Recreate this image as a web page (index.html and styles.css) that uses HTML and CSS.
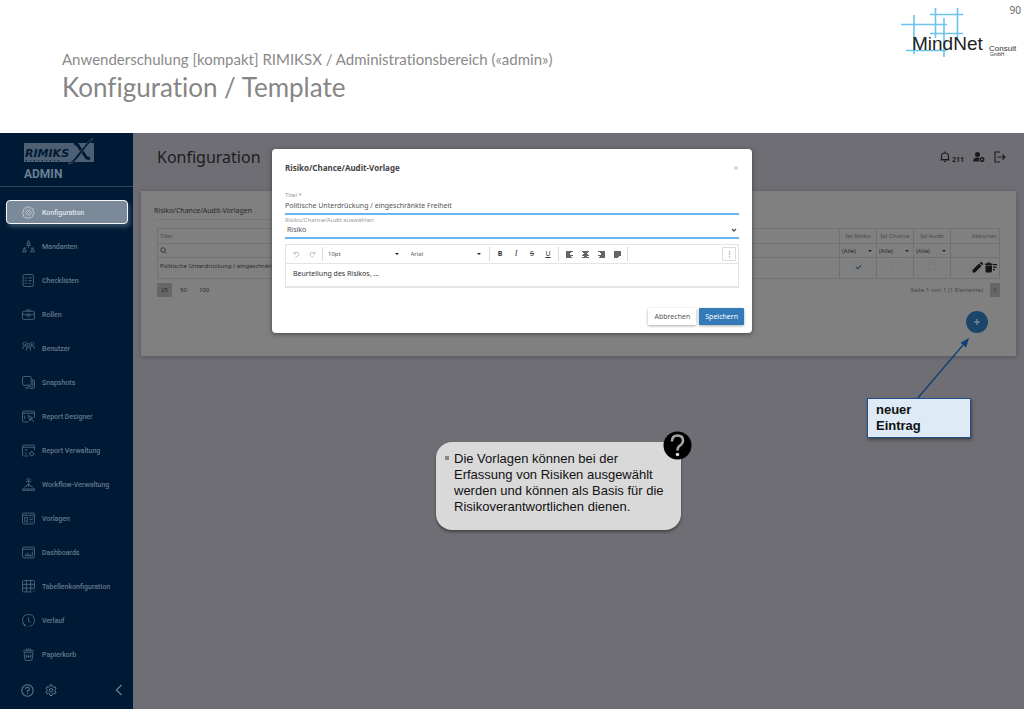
FILE: index.html
```html
<!DOCTYPE html>
<html lang="de">
<head>
<meta charset="utf-8">
<title>Konfiguration / Template</title>
<link rel="stylesheet" href="styles.css">
</head>
<body>
<header class="slide-header">
  <div class="headings">
    <p class="kicker">Anwenderschulung [kompakt] RIMIKSX / Administrationsbereich («admin»)</p>
    <h1 class="slide-title">Konfiguration / Template</h1>
  </div>
  <svg class="mindnet" width="120" height="54" viewBox="0 0 120 54" role="img" aria-label="MindNet Consult GmbH">
    <g stroke="#6cc3ec" stroke-width="1.6" fill="none">
      <path d="M1 19.500H47M6 45.500H47M30 9.500H63M30 28.500H63"/>
      <path d="M14 10V49M44 13V52M35.500 3V33M57.500 3V33"/>
    </g>
    <text x="12" y="45" class="logo-main">MindNet</text>
    <text x="89" y="46" class="logo-sub">Consult</text>
    <text x="90" y="51" class="logo-tiny">GmbH</text>
  </svg>
  <span class="page-no">90</span>
</header>

<div class="stage">
  <aside class="sidebar">
    <div class="brand">
      <svg width="72" height="30" viewBox="0 0 72 30" role="img" aria-label="RIMIKSX Software">
        <rect x="0" y="6" width="70" height="19" fill="#4d6073"/>
        <text x="1" y="20" class="brand-name">RIMIKS</text>
        <path d="M50 7q3-1 5 3l7 10q1 2 4 1" fill="none" stroke="#001a35" stroke-width="3"/>
        <path d="M69 1q-1 3-6 8L53 22q-4 5-9 5 6-4 9-9L62 7q4-5 7-6z" fill="#001a35" stroke="#4d6073" stroke-width=".6"/>
        <path d="M2 23.500h34" stroke="#001a35" stroke-width="1" stroke-dasharray="1 3"/>
      </svg>
      <span class="brand-role">ADMIN</span>
    </div>
    <nav class="menu">
      <a href="#" class="item active"><svg class="ic" viewBox="0 0 24 24"><path d="M9.500 1.500h5l1 3 3-1 3 4-2 2.500 3 1.500v3l-3 1 1 3-3 3-3-1-1.500 3h-3l-1.500-3-3 1-3-3 1-3-3-1.500v-3l3-1-1-3 3-4 3 1z"/><circle cx="12" cy="12" r="5"/><path d="M10 12l2-2 2 2-2 2z"/></svg><span>Konfiguration</span></a>
      <a href="#" class="item"><svg class="ic" viewBox="0 0 24 24"><circle cx="12" cy="3.500" r="2"/><path d="M8.500 10q0-4 3.500-4t3.500 4zM12 10v4M8 14l-3 2M16 14l3 2M1 22q0-4 3.500-4T8 22zM16 22q0-4 3.500-4t3.500 4z"/><circle cx="4.500" cy="16" r="1.500"/><circle cx="19.500" cy="16" r="1.500"/></svg><span>Mandanten</span></a>
      <a href="#" class="item"><svg class="ic" viewBox="0 0 24 24"><path d="M5 1h14q2 0 2 2v17q0 3-3 3H5q-3 0-3-3V3q0-2 3-2zM5 7l1.500 1.500L9 6M12 7h6M5 12l1.500 1.500L9 11M12 12h6M5 17l1.500 1.500L9 16M12 17h4"/></svg><span>Checklisten</span></a>
      <a href="#" class="item"><svg class="ic" viewBox="0 0 24 24"><path d="M3 6h18q2 0 2 2v11q0 2-2 2H3q-2 0-2-2V8q0-2 2-2zM8 6q0-3 4-3t4 3M1 10q3 3 9 3M14 13q6 0 9-3M10 11h4v4h-4z"/></svg><span>Rollen</span></a>
      <a href="#" class="item"><svg class="ic" viewBox="0 0 24 24"><circle cx="5" cy="3" r="3"/><circle cx="19" cy="3" r="3"/><circle cx="12" cy="5" r="2.500"/><path d="M1 13q0-6 4-6 3 0 4 3M23 13q0-6-4-6-3 0-4 3M8 16q0-7 4-7t4 7"/></svg><span>Benutzer</span></a>
      <a href="#" class="item"><svg class="ic" viewBox="0 0 24 24"><path d="M3 1h12q2 0 2 2v12q0 2-2 2H3q-2 0-2-2V3q0-2 2-2zM6 20l2 3h4M15 23h5q3 0 3-3V9l-3-3M20 6v11q0 3-3 3H9"/></svg><span>Snapshots</span></a>
      <a href="#" class="item"><svg class="ic" viewBox="0 0 24 24"><path d="M12 22H3q-2 0-2-2V4q0-2 2-2h18q2 0 2 2v10M1 6h22M5 10v7M11 10l4 10 1-4 4-1zM17 17l5 5"/></svg><span>Report Designer</span></a>
      <a href="#" class="item"><svg class="ic" viewBox="0 0 24 24"><path d="M12 22H3q-2 0-2-2V4q0-2 2-2h18q2 0 2 2v7M1 6h22M5 11h5M5 17h4"/><circle cx="18" cy="18" r="3.500"/><path d="M18 13v2M18 21v2M13 18h2M21 18h2"/></svg><span>Report Verwaltung</span></a>
      <a href="#" class="item"><svg class="ic" viewBox="0 0 24 24"><path d="M8 3q4-4 8 0M7 7l5-2 5 2M12 5v11M8 16q0-4 4-4t4 4M4 17l4-3M20 17l-4-3M1 23v-3h6v3zM9 23v-3h6v3zM17 23v-3h6v3z"/></svg><span>Workflow-Verwaltung</span></a>
      <a href="#" class="item"><svg class="ic" viewBox="0 0 24 24"><path d="M3 2h18q2 0 2 2v15q0 3-3 3H4q-3 0-3-3V4q0-2 2-2zM1 6h22M5 10h5v8H5zM14 10h2M18 10h2M14 14h6M14 18h2M18 18h2"/></svg><span>Vorlagen</span></a>
      <a href="#" class="item"><svg class="ic" viewBox="0 0 24 24"><path d="M3 2h18q2 0 2 2v15q0 3-3 3H4q-3 0-3-3V4q0-2 2-2zM1 6h22M7 18v-4M11 18v-6M15 18v-3M19 18v-8M5 18h15"/></svg><span>Dashboards</span></a>
      <a href="#" class="item"><svg class="ic" viewBox="0 0 24 24"><path d="M3 1h18q2 0 2 2v13M1 3v17q0 2 2 2h14M3 1q-2 0-2 2M1 8h22M1 15h22M8 1v21M16 1v21M20 19l3 3"/></svg><span>Tabellenkonfiguration</span></a>
      <a href="#" class="item"><svg class="ic" viewBox="0 0 24 24"><path d="M8 22Q1 19 1 12 1 1 12 1t11 11q0 8-8 10.500M12 6v7l4 2M2 17l4 6M11 23h1"/></svg><span>Verlauf</span></a>
      <a href="#" class="item"><svg class="ic" viewBox="0 0 24 24"><path d="M2 5h20M8 5V2h8v3M4 8l1 12q0 3 3 3h8q3 0 3-3l1-12zM8 12v6M12 14v4M16 12v6M7 15h10"/></svg><span>Papierkorb</span></a>
    </nav>
    <div class="side-foot">
      <button class="plain" aria-label="Hilfe"><svg width="13" height="13" viewBox="0 0 24 24" class="stroke"><circle cx="12" cy="12" r="10.500"/><path d="M8.500 9.500q0-3.500 3.500-3.500t3.500 3.500Q15.500 11 12 13v2M12 17v2"/></svg></button>
      <button class="plain" aria-label="Einstellungen"><svg width="12" height="12" viewBox="0 0 24 24" class="stroke"><path d="M10 2h4l.600 3 2.600 1.500 3-1 2 3.500-2.400 2v3l2.400 2-2 3.500-3-1-2.600 1.500-.6 3h-4l-.6-3-2.600-1.500-3 1-2-3.500 2.400-2v-3l-2.400-2 2-3.500 3 1L9.400 5z"/><circle cx="12" cy="12.500" r="3.500"/></svg></button>
      <button class="plain collapse" aria-label="Einklappen"><svg width="8" height="12" viewBox="0 0 8 12" class="stroke chevron"><path d="M6.500 1l-5 5 5 5"/></svg></button>
    </div>
  </aside>

  <main class="main">
    <div class="main-head">
      <h2 class="main-title">Konfiguration</h2>
      <div class="tools">
        <button class="plain bell" aria-label="Benachrichtigungen"><svg width="10" height="12" viewBox="0 0 20 24"><path d="M3 17V10q0-6 7-6t7 6v7zM1 18h18M10 4V1M8 21h4" fill="none" stroke="#1c1c1e" stroke-width="2.200"/></svg><span class="count">211</span></button>
        <button class="plain" aria-label="Benutzer"><svg width="12" height="12" viewBox="0 0 24 24"><circle cx="9" cy="7" r="5" fill="#1c1c1e"/><path d="M0 21q0-8 9-8 3 0 4 1-2 3-1 7z" fill="#1c1c1e"/><circle cx="18" cy="17" r="3.500" fill="none" stroke="#1c1c1e" stroke-width="3"/></svg></button>
        <button class="plain" aria-label="Abmelden"><svg width="12" height="12" viewBox="0 0 24 24" fill="none" stroke="#1c1c1e" stroke-width="2.200"><path d="M12 2H2v20h10M7 12h15M17 7l5 5-5 5"/></svg></button>
      </div>
    </div>

    <section class="card">
      <div class="tab">Risiko/Chance/Audit-Vorlagen</div>
      <table class="grid">
        <colgroup><col><col class="c-flag"><col class="c-flag"><col class="c-flag"><col class="c-act"></colgroup>
        <thead>
          <tr><th class="left">Titel</th><th>Ist Risiko</th><th>Ist Chance</th><th>Ist Audit</th><th class="right">Aktionen</th></tr>
          <tr class="filter">
            <td><svg width="7" height="7" viewBox="0 0 14 14" fill="none" stroke="#303030" stroke-width="1.800"><circle cx="6" cy="6" r="4.500"/><path d="M9 9l4 4"/></svg></td>
            <td><span class="pick"><select aria-label="Ist Risiko"><option>(Alle)</option></select></span></td>
            <td><span class="pick"><select aria-label="Ist Chance"><option>(Alle)</option></select></span></td>
            <td><span class="pick"><select aria-label="Ist Audit"><option>(Alle)</option></select></span></td>
            <td></td>
          </tr>
        </thead>
        <tbody>
          <tr class="data">
            <td>Politische Unterdrückung / eingeschränkte Freiheit</td>
            <td class="mid"><input type="checkbox" class="box" aria-label="Ist Risiko" checked></td>
            <td class="mid"><input type="checkbox" class="box" aria-label="Ist Chance"></td>
            <td class="mid"><input type="checkbox" class="box" aria-label="Ist Audit"></td>
            <td class="right"><div class="acts">
              <button class="plain" aria-label="Bearbeiten"><svg width="11" height="11" viewBox="0 0 22 22" fill="#141414"><path d="M1 21v-5L14 3l5 5L6 21zM15.500 1.500L17 0q1-.5 2 0l3 3q.5 1 0 2l-1.500 1.500z"/></svg></button>
              <button class="plain" aria-label="Löschen"><svg width="12" height="11" viewBox="0 0 24 22" fill="#141414"><path d="M0 3h4l1-2h5l1 2h4v3H0zM1 7h13v11q0 3-3 3H4q-3 0-3-3zM16 4h8v2.500h-8zM16 9h7v2.500h-7zM16 14h4v2.500h-4z"/></svg></button>
            </div></td>
          </tr>
        </tbody>
      </table>
      <div class="pager">
        <button class="size on">25</button><button class="size">50</button><button class="size">100</button>
        <span class="info">Seite 1 von 1 (1 Elemente)</span><button class="pageb">1</button>
      </div>
      <div class="fab-row"><button class="fab" aria-label="Neuer Eintrag"><svg width="8" height="8" viewBox="0 0 8 8"><path d="M4 1v6M1 4h6" stroke="#8f9aa5" stroke-width="1"/></svg></button></div>
    </section>
  </main>

  <div class="overlay">
    <form class="modal" role="dialog" aria-labelledby="dlg">
      <div class="modal-head">
        <h3 id="dlg" class="modal-title">Risiko/Chance/Audit-Vorlage</h3>
        <button type="button" class="plain" aria-label="Schliessen"><svg width="6" height="6" viewBox="0 0 6 6"><path d="M1 1l4 4M5 1L1 5" stroke="#b4b4b4" stroke-width=".8"/></svg></button>
      </div>
      <div class="field">
        <label for="titel">Titel *</label>
        <input id="titel" type="text" value="Politische Unterdrückung / eingeschränkte Freiheit">
      </div>
      <div class="field second">
        <label for="art">Risiko/Chance/Audit auswählen</label>
        <span class="pick chev"><select id="art"><option>Risiko</option></select><svg width="6" height="4" viewBox="0 0 6 4"><path d="M1 1l2 2 2-2" fill="none" stroke="#555" stroke-width="1.400"/></svg></span>
      </div>
      <div class="editor">
        <div class="bar">
          <div class="grp">
            <button type="button" class="plain tb" aria-label="Rückgängig"><svg width="7" height="7" viewBox="0 0 14 14" fill="none" stroke="#b4b4b4" stroke-width="1.600"><path d="M2 2v4h4M2 5q4-4 8-2 3 3 1 6-2 3-6 3"/></svg></button>
            <button type="button" class="plain tb" aria-label="Wiederholen"><svg width="7" height="7" viewBox="0 0 14 14" fill="none" stroke="#b4b4b4" stroke-width="1.600"><path d="M12 2v4H8M12 5q-4-4-8-2-3 3-1 6 2 3 6 3"/></svg></button>
          </div>
          <div class="grp g-font">
            <span class="pick"><select aria-label="Schriftgrösse"><option>10pt</option></select></span>
            <span class="pick"><select aria-label="Schriftart"><option>Arial</option></select></span>
          </div>
          <div class="grp">
            <button type="button" class="plain tb"><b>B</b></button><button type="button" class="plain tb"><i class="serif">I</i></button><button type="button" class="plain tb"><s>S</s></button><button type="button" class="plain tb"><u>U</u></button>
          </div>
          <div class="grp">
            <button type="button" class="plain tb" aria-label="Links"><svg width="7" height="7" viewBox="0 0 7 7"><path d="M0 .5h7M0 2.500h4M0 4.500h7M0 6.500h6M0 1.500h5M0 3.500h4M0 5.500h5" stroke="#666"/></svg></button><button type="button" class="plain tb" aria-label="Zentriert"><svg width="7" height="7" viewBox="0 0 7 7"><path d="M0 .5h7M2 2.500h3M0 4.500h7M0 6.500h7M1 1.500h5M1 3.500h5M2 5.500h3" stroke="#666"/></svg></button><button type="button" class="plain tb" aria-label="Rechts"><svg width="7" height="7" viewBox="0 0 7 7"><path d="M0 .5h7M3 2.500h4M0 4.500h7M1 6.500h6M2 1.500h5M3 3.500h4M2 5.500h5" stroke="#666"/></svg></button><button type="button" class="plain tb" aria-label="Blocksatz"><svg width="7" height="7" viewBox="0 0 7 7"><path d="M0 .5h7M0 2.500h7M0 4.500h7M0 6.500h4M0 1.500h7M0 3.500h7M0 5.500h5" stroke="#666"/></svg></button>
          </div>
          <button type="button" class="more" aria-label="Mehr"><svg width="3" height="7" viewBox="0 0 3 7"><path d="M1.500 0v7" stroke="#aaa" stroke-width="1.200" stroke-dasharray="1.400 1.200"/></svg></button>
        </div>
        <div class="text" contenteditable="true">Beurteilung des Risikos, ...</div>
      </div>
      <div class="modal-foot">
        <button type="button" class="btn">Abbrechen</button>
        <button type="button" class="btn primary">Speichern</button>
      </div>
    </form>
  </div>

  <svg class="arrow" width="58" height="66" viewBox="0 0 58 66" aria-hidden="true"><path d="M4 64L50 10" stroke="#123f73" stroke-width="1.300"/><path d="M56 3l-3 9.500-5.500-4.700z" fill="#0b3f7c"/></svg>
  <div class="tag">neuer Eintrag</div>
  <div class="hint">
    <ul><li>Die Vorlagen können bei der Erfassung von Risiken ausgewählt werden und können als Basis für die Risikoverantwortlichen dienen.</li></ul>
    <svg class="hint-mark" width="29" height="29" viewBox="0 0 29 29" aria-hidden="true"><circle cx="14.500" cy="14.500" r="14" fill="#000"/><path d="M9 10.500q0-6 5.500-6t5.500 5q0 3-3 5-2.500 1.500-2.500 5" fill="none" stroke="#a3a3a3" stroke-width="2.600"/><circle cx="14.500" cy="23.500" r="1.800" fill="#d9d9d9"/></svg>
  </div>
</div>
</body>
</html>
```

FILE: styles.css
```css
* { box-sizing: border-box; }
body {
  margin: 0;
  min-height: 100vh;
  display: flex;
  flex-direction: column;
  background: #fff;
  font: 7px/10px "Noto Sans", sans-serif;
}
button, input, select { font: inherit; color: inherit; margin: 0; }
.plain { border: 0; padding: 0; background: none; display: flex; align-items: center; }

/* Slide header */
.slide-header { display: flex; align-items: flex-start; height: 133px; padding: 0 3px 0 62px; font-family: Lato, sans-serif; font-variant-ligatures: none; color: #8a8a8a; }
.headings { flex: 1; padding-top: 49px; }
.kicker { margin: 0; font-size: 15px; line-height: 20px; }
.slide-title { margin: 0; font-size: 26px; line-height: 37px; font-weight: 400; color: #868686; }
.mindnet { margin: 5px 2px 0 0; }
.logo-main { font: 19px "Liberation Sans", sans-serif; fill: #222; }
.logo-sub { font: 8px "Liberation Sans", sans-serif; fill: #333; }
.logo-tiny { font: 5px "Liberation Sans", sans-serif; fill: #333; }
.page-no { padding-top: 4px; font: 10px/12px "Noto Sans", sans-serif; color: #666; margin-left: -12px; }

/* Application */
.stage { position: relative; flex: 1; display: flex; background: #6f6e74; }
.sidebar { width: 133px; display: flex; flex-direction: column; background: #001a35; color: #64788b; }
.brand { height: 54px; padding: 4px 0 0 24px; border-bottom: 1px solid #33475b; display: flex; flex-direction: column; }
.brand-name { font: italic bold 11px "DejaVu Sans", sans-serif; fill: #001a35; }
.brand-role { font: bold 12px/15px Roboto, sans-serif; color: #6c7f92; }
.menu { flex: 1; display: grid; grid-auto-rows: 1fr; align-items: center; padding: 8px 5px 0 6px; }
.item { height: 24px; display: flex; align-items: center; gap: 7px; padding-left: 16px; color: inherit; text-decoration: none; font: 500 7px/10px Roboto, sans-serif; }
.item span { padding-top: 1px; }
.ic { width: 13px; height: 13px; fill: none; stroke: #53687c; stroke-width: 1.6; }
.active { background: #7b8a9a; border: 1px solid #f4f6f8; border-radius: 4px; padding-left: 15px; color: #dfe5ea; box-shadow: 2px 3px 4px #3a4f66; }
.active .ic { stroke: #c3ccd5; }
.side-foot { display: flex; align-items: center; gap: 11px; height: 38px; padding: 0 10px 0 21px; }
.stroke { fill: none; stroke: #64788b; stroke-width: 2; }
.chevron { stroke-width: 1.4; }
.collapse { margin-left: auto; }

.main { flex: 1; padding: 0 8px; min-width: 0; }
.main-head { display: flex; justify-content: space-between; align-items: center; height: 58px; padding: 0 10px 10px 16px; }
.main-title { margin: 0; font-size: 16px; line-height: 24px; font-weight: 400; color: #1d1d20; }
.tools { display: flex; align-items: center; gap: 9px; }
.count { font: bold 7px/8px "Noto Sans", sans-serif; padding-top: 6px; margin-left: 2px; color: #1c1c1e; }
.card { background: #808080; padding: 14px 16px 23px; box-shadow: 0 1px 4px #55555a; }
.tab { width: 240px; height: 15px; padding-bottom: 2px; margin-left: -3px; color: #28282a; font-size: 7px; line-height: 12px; border-bottom: 1px solid #777; }
.grid { width: 100%; margin-top: 8px; border-collapse: collapse; table-layout: fixed; border: 1px solid #6f6f6f; color: #2b2b2b; font-size: 6px; line-height: 8px; }
.c-flag { width: 37px; }
.c-act { width: 49px; }
.grid th, .grid td { border: 1px solid #717171; padding: 0 2px; height: 15px; font-weight: 400; }
.grid .filter td { height: 14px; }
.grid th { color: #4b4b4b; text-align: center; }
.grid .data td { height: 21px; border-top-color: #606060; padding-bottom: 4px; }
.grid .left { text-align: left; }
.grid .right { text-align: right; }
.grid .mid { text-align: center; padding: 0; }
.grid svg { display: block; }
.pick { display: flex; align-items: center; }
.pick select { flex: 1; min-width: 0; appearance: none; border: 0; padding: 0; background: transparent; }
.pick:not(.chev)::after { content: ""; margin-right: 2px; border: 2px solid transparent; border-top-color: #222; border-bottom-width: 0; }
.box { appearance: none; width: 8px; height: 8px; border: 1px solid #7b7b7b; margin: 0; display: inline-grid; place-items: center; vertical-align: middle; }
.box:checked::after { content: ""; width: 4px; height: 2px; border-left: 1px solid #1d4468; border-bottom: 1px solid #1d4468; transform: rotate(-45deg); }
.acts { display: flex; justify-content: flex-end; gap: 2px; padding-top: 2px; }
.pager { display: flex; align-items: center; padding-top: 4px; color: #2b2b2b; font-size: 6px; line-height: 8px; }
.size, .pageb { border: 0; background: none; height: 14px; padding: 0 4px; min-width: 15px; margin-right: 4px; }
.on, .pageb { background: #666; border-radius: 1px; }
.info { margin-left: auto; color: #484848; }
.pageb { min-width: 10px; padding: 0 3px; margin: 0 0 0 7px; }
.fab-row { display: flex; justify-content: flex-end; padding: 14px 12px 0 0; }
.fab { width: 22px; height: 22px; border: 0; border-radius: 50%; background: #1c456b; padding: 0; display: grid; place-items: center; }

/* Dialog */
.overlay { position: absolute; inset: 0; display: flex; justify-content: center; align-items: flex-start; padding-top: 16px; }
.modal { width: 480px; padding: 13px 13px 8px; background: #fff; border-radius: 4px; box-shadow: 0 1px 5px #444; color: #555; }
.modal-head { display: flex; justify-content: space-between; align-items: center; height: 12px; }
.modal-title { margin: 0; font-size: 8px; line-height: 12px; color: #444; }
.field { display: flex; flex-direction: column; margin-top: 16px; border-bottom: 2px solid #6bb5f0; height: 25px; }
.field label { font-size: 6px; line-height: 10px; color: #9a9a9a; }
.field input { border: 0; padding: 0; height: 11px; background: none; }
.field.second { margin-top: 0; height: 24px; }
.field .chev { padding: 0 2px; }
.editor { margin-top: 5px; border: 1px solid #e4e4e4; border-bottom-width: 2px; }
.bar { display: flex; align-items: center; height: 19px; border-bottom: 1px solid #e4e4e4; padding-right: 2px; }
.grp { display: flex; align-items: center; height: 14px; border-right: 1px solid #ddd; padding: 0 2px; }
.g-font { width: 167px; padding: 0 6px 0 5px; gap: 10px; font-size: 6px; }
.g-font .pick { flex: 1; }
.tb { width: 16px; height: 12px; justify-content: center; color: #333; }
.serif { font-family: "Liberation Serif", serif; font-size: 8px; }
.more { width: 14px; height: 14px; margin-left: auto; padding: 0; border: 1px solid #ddd; border-radius: 1px; background: #fff; display: grid; place-items: center; }
.text { min-height: 22px; padding: 5px 7px; color: #333; }
.modal-foot { display: flex; justify-content: flex-end; gap: 3px; margin: 20px -5px 0 0; }
.btn { height: 17px; padding: 0 6px; border: 0; border-radius: 1px; background: #fff; color: #555; box-shadow: 0 1px 3px #aaa; line-height: 10px; }
.primary { background: #337ab7; color: #fff; }

/* Annotations */
.arrow { position: absolute; right: 53px; top: 202px; }
.tag { position: absolute; right: 53px; top: 265px; width: 104px; padding: 3px 40px 3px 8px; border: 1px solid #1f4e8c; background: #deebf7; font: bold 13px/16px "Liberation Sans", sans-serif; color: #111; box-shadow: 1px 2px 3px #444; }
.hint { position: absolute; left: 436px; top: 309px; width: 245px; padding: 9px 8px 15px; background: #d9d9d9; border-radius: 16px; box-shadow: 0 2px 3px #444; font: 13px/16px "Liberation Sans", sans-serif; color: #111; }
.hint ul { margin: 0; padding: 0 0 0 10px; list-style: none; }
.hint li::before { content: ""; float: left; width: 4px; height: 4px; margin: 5px 0 0 -9px; background: #888; }
.hint-mark { position: absolute; right: -11px; top: -11px; }
```
